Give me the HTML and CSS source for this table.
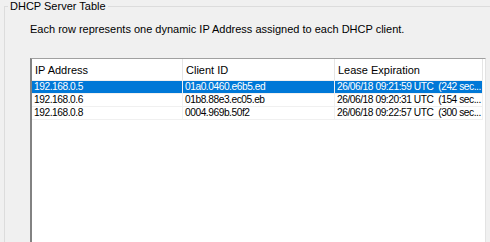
FILE: index.html
```html
<!DOCTYPE html>
<html lang="en">

<head>
    <meta charset="UTF-8">
    <title>DHCP Server Table</title>
    <link rel="stylesheet" href="styles.css">
</head>

<body>

    <fieldset class="groupbox">
        <legend>DHCP Server Table</legend>

        <p class="hint">Each row represents one dynamic IP Address assigned to each DHCP client.</p>

        <div class="listview">
            <table class="leases">
                <thead>
                    <tr>
                        <th class="col-ip">IP Address</th>
                        <th class="col-id">Client ID</th>
                        <th class="col-exp">Lease Expiration</th>
                    </tr>
                </thead>
                <tbody>
                    <tr class="selected">
                        <td>192.168.0.5</td>
                        <td>01a0.0460.e6b5.ed</td>
                        <td>26/06/18 09:21:59 UTC&nbsp; (242 sec...</td>
                    </tr>
                    <tr>
                        <td>192.168.0.6</td>
                        <td>01b8.88e3.ec05.eb</td>
                        <td>26/06/18 09:20:31 UTC&nbsp; (154 sec...</td>
                    </tr>
                    <tr>
                        <td>192.168.0.8</td>
                        <td>0004.969b.50f2</td>
                        <td>26/06/18 09:22:57 UTC&nbsp; (300 sec...</td>
                    </tr>
                </tbody>
            </table>
        </div>
    </fieldset>

</body>

</html>
```

FILE: styles.css
```css
body {
    margin: 0;
    background-color: #f0f0f0;
    color: #000;
    font-family: "Liberation Sans", Arial, sans-serif;
    font-size: 11px;
    overflow: hidden;
    height: 242px;
}

.groupbox {
    margin: 0 0 0 4px;
    padding: 0 0 0 25px;
    border: 1px solid #dcdcdc;
    border-right: none;
    border-bottom: none;
    height: 242px;
    box-sizing: border-box;
}

.groupbox legend {
    margin-left: -22px;
    padding: 0 2px;
    line-height: 12px;
}

.hint {
    margin: 10px 0 0 0;
    line-height: 14px;
}

.listview {
    margin-top: 22px;
    width: 453px;
    height: 184px;
    background: #fff;
    border-top: 1px solid #a0a0a0;
    border-left: 2px solid #828282;
    border-right: 1px solid #e3e3e3;
}

.leases {
    border-collapse: collapse;
    table-layout: fixed;
    width: 451px;
}

.leases th {
    font-weight: normal;
    text-align: left;
    height: 21px;
    padding: 0 0 0 3px;
    border-right: 1px solid #e5e5e5;
    border-bottom: 1px solid #f0f0f0;
}

.col-ip {
    width: 147px;
}

.col-id {
    width: 148px;
}

.leases td {
    height: 12px;
    padding: 0 0 0 2px;
    font-size: 10.2px;
    letter-spacing: -0.45px;
    white-space: nowrap;
    overflow: hidden;
    border-right: 1px solid #f0f0f0;
    border-bottom: 1px solid #f0f0f0;
    line-height: 12px;
}

.leases tr.selected td {
    background: #0078d7;
    color: #fff;
    border-right-color: #f0f0f0;
}
```
